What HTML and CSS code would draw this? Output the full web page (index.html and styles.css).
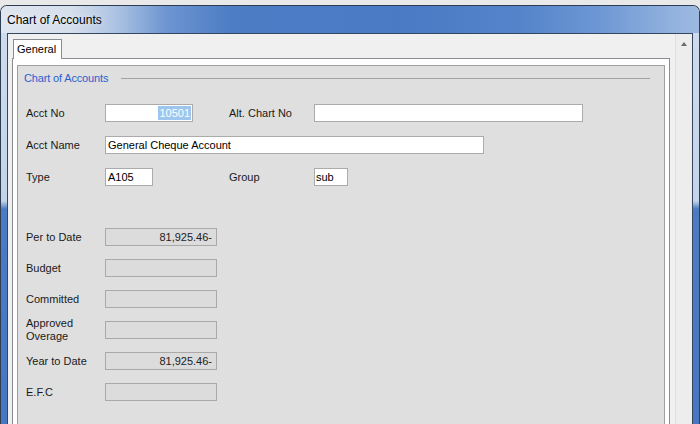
FILE: index.html
```html
<!DOCTYPE html>
<html>
<head>
<meta charset="utf-8">
<title>Chart of Accounts</title>
<link rel="stylesheet" href="styles.css">
</head>
<body>
<div class="window">
  <div class="titlebar"><span class="title">Chart of Accounts</span></div>
  <div class="frame">
    <div class="client">
      <div class="tabs">
        <div class="tabstrip"><div class="tab">General</div></div>
        <div class="tabpage">
          <div class="group">
            <div class="group-head"><span class="group-title">Chart of Accounts</span><span class="group-line"></span></div>
            <div class="form-top">
              <span class="lbl">Acct No</span>
              <span class="inp w-acct right"><span class="sel">10501</span></span>
              <span class="lbl">Alt. Chart No</span>
              <span class="inp w-alt"></span>

              <span class="lbl">Acct Name</span>
              <span class="inp w-name span3">General Cheque Account</span>

              <span class="lbl">Type</span>
              <span class="inp w-type">A105</span>
              <span class="lbl">Group</span>
              <span class="inp w-group tight">sub</span>
            </div>
            <div class="form-bottom">
              <span class="lbl">Per to Date</span>
              <span class="box">81,925.46-</span>
              <span class="lbl">Budget</span>
              <span class="box"></span>
              <span class="lbl">Committed</span>
              <span class="box"></span>
              <span class="lbl two">Approved<br>Overage</span>
              <span class="box"></span>
              <span class="lbl">Year to Date</span>
              <span class="box">81,925.46-</span>
              <span class="lbl">E.F.C</span>
              <span class="box"></span>
            </div>
          </div>
        </div>
      </div>
      <div class="scrollbar"><span class="arrow-up"></span></div>
    </div>
  </div>
</div>
</body>
</html>
```

FILE: styles.css
```css
html, body {
  margin: 0;
  padding: 0;
  background: #e9e9e9;
  overflow: hidden;
}
body {
  width: 700px;
  height: 424px;
  font-family: "Liberation Sans", Arial, sans-serif;
  font-size: 11px;
  color: #1a1a1a;
}
.window {
  margin-top: 5px;
  height: 418px;
  border: 1px solid #2f3d52;
  border-bottom: none;
  border-radius: 7px 7px 0 0;
  display: flex;
  flex-direction: column;
  background: linear-gradient(to bottom, #cfdcec 0, #c3d4ea 195px, #4b7bc3 203px, #4677c0 100%);
  overflow: hidden;
}
.titlebar {
  height: 27px;
  flex: none;
  display: flex;
  align-items: center;
  padding-left: 6px;
  background: linear-gradient(to right, #dfe6ef 0, #d5deec 70px, #adc3e3 115px, #6d95d1 165px, #4d7dc5 230px, #4a7ac3 400px, #5584cb 520px, #6e98d4 600px, #91b1de 670px, #9db9e0 100%);
}
.title {
  font-size: 12px;
  color: #000;
  text-shadow: 0 0 6px rgba(255,255,255,0.8);
  padding-top: 1px;
}
.frame {
  flex: 1;
  display: flex;
  padding: 0 6px;
  min-height: 0;
}
.client {
  flex: 1;
  display: flex;
  border: 1px solid #34475f;
  border-bottom: none;
  background: #f0f0f0;
  min-height: 0;
}
.tabs {
  width: 658px;
  margin-left: 4px;
  display: flex;
  flex-direction: column;
}
.tabstrip {
  display: flex;
  padding-top: 5px;
  padding-left: 1px;
}
.tab {
  height: 19px;
  line-height: 19px;
  padding: 0 5px 0 3px;
  background: #ffffff;
  border: 1px solid #898c95;
  border-bottom: none;
  margin-bottom: -1px;
  position: relative;
  z-index: 1;
  color: #000;
}
.tabpage {
  flex: 1;
  background: #ffffff;
  border: 1px solid #898c95;
  border-bottom: none;
  padding: 6px 4px 0 4px;
  display: flex;
}
.group {
  flex: 1;
  background: #dfdfdf;
  border: 1px solid #a0a0a0;
  border-bottom: none;
}
.group-head {
  height: 23px;
  display: flex;
  align-items: center;
  padding: 0 14px 0 6px;
  gap: 13px;
}
.group-title {
  color: #2a5fd0;
  letter-spacing: -0.15px;
}
.group-line {
  flex: 1;
  height: 1px;
  background: #a2a2a2;
  margin-top: 1px;
}
.form-top {
  margin-top: 15px;
  padding-left: 8px;
  display: grid;
  grid-template-columns: 79px 124px 85px 1fr;
  grid-auto-rows: 18px;
  row-gap: 14px;
  align-items: center;
}
.lbl {
  color: #1a1a1a;
  line-height: 13px;
}
.inp {
  box-sizing: border-box;
  height: 18px;
  background: #fff;
  border: 1px solid #ababab;
  line-height: 16px;
  padding: 0 2px;
  color: #000;
  display: flex;
  align-items: center;
  white-space: nowrap;
}
.inp.right { justify-content: flex-end; padding-right: 1px; }
.inp.tight { padding-left: 1px; }
.span3 { grid-column: 2 / span 3; }
.w-acct { width: 88px; }
.w-alt { width: 269px; }
.w-name { width: 379px; }
.w-type { width: 48px; }
.w-group { width: 34px; }
.sel {
  background: #9dc6ee;
  color: #ffffff;
  line-height: 14px;
  padding: 0 1px;
}
.form-bottom {
  margin-top: 42px;
  padding-left: 8px;
  display: grid;
  grid-template-columns: 79px 113px;
  grid-auto-rows: 18px;
  row-gap: 13px;
  align-items: center;
}
.box {
  box-sizing: border-box;
  width: 112px;
  height: 18px;
  background: #dcdcdc;
  border: 1px solid #a9a9a9;
  text-align: right;
  padding-right: 4px;
  line-height: 16px;
  color: #222;
}
.scrollbar {
  width: 17px;
  margin-left: 5px;
  background: #ededed;
  border-left: 1px solid #dedede;
  box-sizing: border-box;
  display: flex;
  justify-content: center;
  padding-top: 8px;
}
.arrow-up {
  width: 0;
  height: 0;
  border-left: 3.5px solid transparent;
  border-right: 3.5px solid transparent;
  border-bottom: 4px solid #6b6b6b;
}
```
